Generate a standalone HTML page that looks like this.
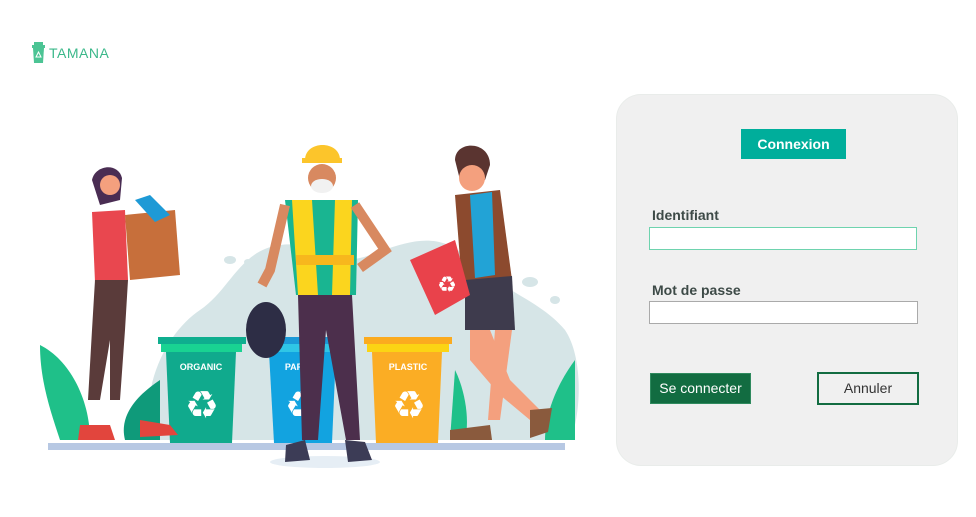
<!DOCTYPE html>
<html><head><meta charset="utf-8"><style>
*{margin:0;padding:0;box-sizing:border-box}
body{width:976px;height:517px;background:#fff;font-family:"Liberation Sans",sans-serif;position:relative;overflow:hidden}
.logo{position:absolute;left:32px;top:42px;display:flex;align-items:center;gap:3px;color:#3bb88a;font-size:14px;letter-spacing:.5px}
.panel{position:absolute;left:616px;top:94px;width:342px;height:372px;background:#f0f0f0;border-radius:25px;border:1px solid #e9ecea}
.cx{position:absolute;left:124px;top:34px;width:105px;height:30px;background:#00ae9b;color:#fff;font-weight:bold;font-size:14px;text-align:center;line-height:30px}
.lbl{position:absolute;left:35px;font-weight:bold;font-size:14px;color:#3d4a47}
.in{position:absolute;left:32px;width:268px;height:23px;background:#fff}
.b1{position:absolute;left:33px;top:278px;width:101px;height:31px;background:#126c41;border:1px solid #2f8a5e;color:#fff;font-size:14px;text-align:center;line-height:29px}
.b2{position:absolute;left:200px;top:277px;width:102px;height:33px;border:2px solid #126c41;color:#333;font-size:14px;text-align:center;line-height:29px}
</style></head><body>
<div class="logo"><svg width="14" height="22" viewBox="0 0 14 22"><rect x="2" y="0" width="9" height="3" fill="#4cc494"/><rect x="0" y="3" width="13" height="3" fill="#4cc494"/><path d="M1 6 L12 6 L11 21 L2 21Z" fill="#4cc494"/><path d="M4 15 L6.5 10 L9 15Z" fill="none" stroke="#fff" stroke-width="1"/></svg>TAMANA</div>

<svg style="position:absolute;left:0;top:0" width="600" height="517" viewBox="0 0 600 517">
<path d="M150 440 C140 380 170 330 200 310 C230 290 240 250 280 245 C320 240 330 270 370 255 C410 240 440 230 470 260 C500 290 540 300 565 330 C585 360 580 420 570 440Z" fill="#d6e5e7"/>
<ellipse cx="230" cy="260" rx="6" ry="4" fill="#d6e5e7"/><ellipse cx="248" cy="262" rx="4" ry="3" fill="#d6e5e7"/>
<ellipse cx="530" cy="282" rx="8" ry="5" fill="#d6e5e7"/><ellipse cx="555" cy="300" rx="5" ry="4" fill="#d6e5e7"/>
<!-- plants -->
<path d="M40 345 C70 360 90 400 90 440 L60 440 C50 410 40 380 40 345Z" fill="#1fc089"/>
<path d="M160 380 C130 400 120 420 125 440 L160 440Z" fill="#0f9a7a"/>
<path d="M575 360 C560 380 545 410 545 440 L575 440Z" fill="#1fc089"/>
<path d="M455 370 C465 390 470 420 465 440 L450 440Z" fill="#1fc089"/>
<!-- ground -->
<rect x="48" y="443" width="517" height="7" fill="#b7c8e3"/>
<ellipse cx="325" cy="462" rx="55" ry="6" fill="#e6eef5"/>
<!-- organic -->
<rect x="158" y="337" width="88" height="7" fill="#0fae8f"/><rect x="161" y="344" width="81" height="8" fill="#19d392"/>
<path d="M166 352 L236 352 L232 443 L170 443Z" fill="#10aa8d"/>
<text x="201" y="370" font-size="9" font-weight="bold" fill="#fff" text-anchor="middle" font-family="Liberation Sans">ORGANIC</text>
<text x="202" y="418" font-size="38" fill="#fff" text-anchor="middle" font-family="DejaVu Sans">♻</text>
<!-- paper -->
<rect x="268" y="337" width="86" height="7" fill="#1b9ad8"/><rect x="271" y="344" width="80" height="8" fill="#2fc6e6"/>
<path d="M269 352 L336 352 L332 443 L274 443Z" fill="#12a3e0"/>
<text x="300" y="370" font-size="9" font-weight="bold" fill="#fff" text-anchor="middle">PAPER</text>
<text x="302" y="418" font-size="38" fill="#fff" text-anchor="middle" font-family="DejaVu Sans">♻</text>
<!-- plastic -->
<rect x="364" y="337" width="88" height="7" fill="#fbab1f"/><rect x="367" y="344" width="82" height="8" fill="#fbd414"/>
<path d="M372 352 L442 352 L438 443 L376 443Z" fill="#fbad24"/>
<text x="408" y="370" font-size="9" font-weight="bold" fill="#fff" text-anchor="middle">PLASTIC</text>
<text x="409" y="418" font-size="38" fill="#fff" text-anchor="middle" font-family="DejaVu Sans">♻</text>
<!-- woman left -->
<path d="M92 180 C95 165 118 162 122 178 L120 200 L100 205Z" fill="#4a2d53"/>
<circle cx="110" cy="185" r="10" fill="#f4a07e"/>
<path d="M92 212 L125 210 L128 280 L95 282Z" fill="#e9474f"/>
<path d="M95 280 L128 280 L125 330 L120 400 L110 400 L110 340 L100 400 L88 400 L92 330Z" fill="#5a3b3a"/>
<path d="M80 425 L110 425 L115 440 L78 440Z" fill="#e2453d"/><path d="M140 420 L170 425 L178 435 L140 437Z" fill="#e2453d"/>
<path d="M125 215 L175 210 L180 275 L130 280Z" fill="#c76f3b"/>
<path d="M135 200 L150 195 L170 215 L155 222Z" fill="#1e9ad6"/>
<!-- worker -->
<path d="M305 160 C305 140 340 140 340 160Z" fill="#fcc52b"/><rect x="302" y="158" width="40" height="5" fill="#fcc52b"/>
<circle cx="322" cy="178" r="14" fill="#d88960"/><ellipse cx="322" cy="186" rx="11" ry="7" fill="#f1f1f1"/>
<path d="M285 200 L358 200 L356 295 L296 295Z" fill="#19b591"/>
<path d="M292 200 L312 200 L318 295 L298 295Z M335 200 L352 200 L350 295 L332 295Z" fill="#fbd51e"/>
<rect x="296" y="255" width="58" height="10" fill="#f7b71d"/>
<path d="M298 295 L352 295 L360 440 L346 440 L326 330 L318 440 L302 440Z" fill="#4c2f4c"/>
<path d="M286 445 L305 440 L310 460 L285 462Z M345 440 L365 442 L372 460 L348 462Z" fill="#3c3c56"/>
<path d="M285 205 L270 270 L262 285" stroke="#d88960" stroke-width="10" fill="none"/>
<path d="M355 205 L385 250 L360 268" stroke="#d88960" stroke-width="10" fill="none"/>
<ellipse cx="266" cy="330" rx="20" ry="28" fill="#2d2d45"/>
<!-- man right -->
<path d="M455 160 C455 140 490 140 490 165 L485 180 L460 180Z" fill="#5a3430"/>
<circle cx="472" cy="178" r="13" fill="#f4a07e"/>
<path d="M455 195 L500 190 L512 280 L462 285Z" fill="#8c4a2e"/>
<path d="M470 195 L492 192 L495 275 L475 278Z" fill="#22a3d6"/>
<path d="M465 280 L512 276 L515 330 L465 330Z" fill="#3e3b4d"/>
<path d="M470 330 L490 330 L510 380 L540 410 L530 420 L500 395 L470 360Z" fill="#f4a07e"/>
<path d="M495 330 L512 330 L500 420 L488 420Z" fill="#f4a07e"/>
<path d="M450 430 L490 425 L492 440 L450 440Z" fill="#8a5a3d"/><path d="M530 410 L552 408 L548 432 L530 438Z" fill="#8a5a3d"/>
<path d="M410 260 L455 240 L470 295 L435 315Z" fill="#e9424b"/>
<text x="447" y="292" font-size="22" fill="#fff" text-anchor="middle" font-family="DejaVu Sans">♻</text>
</svg>

<div class="panel">
<div class="cx">Connexion</div>
<div class="lbl" style="top:112px">Identifiant</div>
<div class="in" style="top:132px;border:1px solid #6ed3ae"></div>
<div class="lbl" style="top:187px">Mot de passe</div>
<div class="in" style="top:206px;width:269px;border:1px solid #aaa"></div>
<div class="b1">Se connecter</div>
<div class="b2">Annuler</div>
</div>
</body></html>
